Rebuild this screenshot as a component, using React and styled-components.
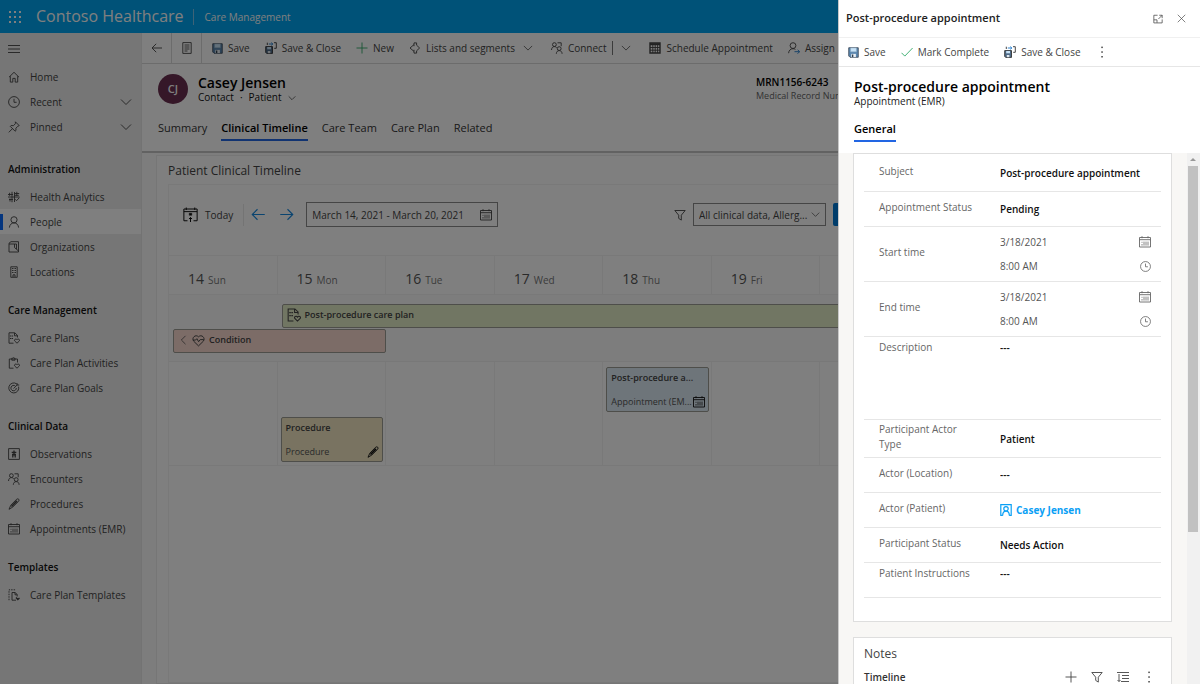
import React from "react";
import styled, { createGlobalStyle, css } from "styled-components";

const GlobalStyle = createGlobalStyle`
  *, *::before, *::after { box-sizing: border-box; }
  html, body { margin: 0; background: #fff; }
  body, button, input, select, textarea {
    font-family: "Open Sans", "Noto Sans", sans-serif;
    font-size: 10px;
    line-height: 16px;
    color: #444;
  }
  button, input, select, textarea {
    margin: 0; padding: 0; border: 0; background: none; appearance: none; outline: none; border-radius: 0;
  }
  h1, h2, h3, p { margin: 0; font-weight: 400; }
  a { color: inherit; text-decoration: none; }
  ul { margin: 0; padding: 0; list-style: none; }
`;

/* ---------- icons, drawn on a 12 unit grid ---------- */

const Svg = styled.svg`
  display: block;
  flex: none;
  width: ${(p) => p.$size || 12}px;
  height: ${(p) => p.$size || 12}px;
  fill: none;
  stroke: currentColor;
  stroke-width: ${(p) => p.$weight || 0.9};
  color: ${(p) => p.$color || "inherit"};
`;

const shapes = {
  waffle: (
    <g fill="currentColor" stroke="none">
      {[0, 5, 10].map((y) =>
        [0, 5, 10].map((x) => <rect key={`${x}-${y}`} x={x} y={y} width="2" height="2" />)
      )}
    </g>
  ),
  menu: <path d="M0 2.5h12M0 6h12M0 9.5h12" />,
  home: <path d="M1 6.2 6 1.3l5 4.9M2.3 5.2v5.9h2.5V7.4h2.4v3.7h2.5V5.2" />,
  clock: (
    <>
      <circle cx="6" cy="6" r="5.4" />
      <path d="M6 2.8v3.5h2.6" />
    </>
  ),
  pin: <path d="m7.4.8 3.8 3.8-1.3.6-2 2 .1 2.2-.9.8-4.8-4.8.8-.9 2.3.2 2-2zM4.6 7.5.8 11.3" />,
  chevronDown: <path d="m1 3.5 5 5 5-5" />,
  chevronLeft: <path d="m9 1-5 5 5 5" />,
  analytics: (
    <path d="M0 3.500h5M0 6h11.500M1 8.500h4M4 .8v10.400M6.500 1v10M8.800.8v4M6.800 2.500h4.400M6.800 4.300h4M7 8.200l1.500 1.500 2.800-3M1.600 1.800v3M2 7.500v3" />
  ),
  person: (
    <>
      <circle cx="6" cy="3.800" r="3.100" />
      <path d="M1.400 11.600c.2-2.800 2-4.700 4.600-4.700s4.400 1.900 4.600 4.700" />
    </>
  ),
  organization: <path d="M1 11V2.200L3 .7h7.500V11zM1 3h5.500v3.500L10.500 10M6.500 3h2v5" />,
  building: (
    <>
      <path d="M2.800.8h6.400v10.500H2.800zM5 11V8.800h2V11" />
      <path d="M4.500 2v5.500M6 2v5.500M7.500 2v5.500" strokeDasharray="1 1" />
    </>
  ),
  carePlan: (
    <>
      <path d="M5.500 11.200H1V.8h5.800L9.500 3.400v2.100M6.500 1v2.800h3" />
      <path d="M2.600 3.500v1M4.400 3.500v1M2.600 6v1M4.400 6v1" strokeWidth="1.300" />
      <path d="M9 11.200 6.700 9c-1-1.400 1.200-2.800 2.300-1.200C10.100 6.200 12.300 7.600 11.300 9z" />
    </>
  ),
  clipboard: (
    <>
      <path d="M5.500 11.200H1.300V2H9.500v3.500M3.800 3.200V1.200h.8Q5.400.1 6.200 1.200H7v2z" />
      <path d="M9 11.200 6.700 9c-1-1.400 1.200-2.800 2.300-1.200C10.100 6.200 12.300 7.600 11.300 9z" />
    </>
  ),
  goal: (
    <>
      <path d="M8.600 1.800A5 5 0 1 0 10.600 4.600" />
      <path d="M7.300 4A2.700 2.700 0 1 0 8.300 6" />
      <path d="M5.600 6.500 9.500 2.600M9 1v2h2.200" />
    </>
  ),
  observation: (
    <>
      <path d="M.6.6h10.800v10.800H.6z" />
      <path d="M6 2.500v4.500M3.700 4.400h4.600M4 6.500h4M4.800 9.500V6.800h2.400v2.700" strokeWidth="1.300" />
    </>
  ),
  people: (
    <>
      <circle cx="3.400" cy="2.600" r="1.900" />
      <path d="M.5 8c.1-2 1.100-3.400 2.900-3.400 1 0 1.800.4 2.300 1.100M6.500.8h3.700v3.400" />
      <circle cx="8.200" cy="6.600" r="1.900" />
      <path d="M5.300 11.800c.1-2 1.200-3.200 2.900-3.200s2.800 1.200 2.900 3.200" />
    </>
  ),
  scalpel: (
    <>
      <path d="M1 11.300 2.800 7.200l5.900-6q1.200-.8 2 0t0 2l-6 5.900z" />
      <path d="m3.500 8.500 5.500-5.700" strokeWidth="1.800" />
    </>
  ),
  calendar: (
    <>
      <path d="M.5 1.500h11v9.500H.5zM.5 3.700h11M3 .2v2M9 .2v2" />
      <path d="M3 9.600V8M5 9.600v-4M7 9.600v-4M9 9.600v-4M3 6.800v-1" strokeWidth=".8" />
    </>
  ),
  template: (
    <>
      <path d="M1 11.200V.8h7" strokeDasharray="1.500 1" />
      <path d="M8 11.200H4V3.500h3.200l2 2v2M7 3.500v2.300h2" />
      <path d="m8 8.500 1.800 2L11.500 9" strokeWidth="1.300" />
    </>
  ),
  back: <path d="M11 6H1.200M5.200 1.800 1 6l4.200 4.200" />,
  forward: <path d="M1 6h9.800M6.800 1.800 11 6l-4.200 4.200" />,
  form: <path d="M1.800.6h8.400v10.800H1.800zM3.500 3h5M3.500 5h5M3.500 7h5M3.500 9h3" />,
  save: (
    <>
      <path d="M.8.8h10.400v10.400H2.200L.8 9.800z" fill="#5a87b0" stroke="#3c4856" />
      <path d="M2.800 1h6.400v4.200H2.800z" fill="#c7e2f7" stroke="#8fa9bf" strokeWidth=".5" />
      <path d="M3.600 7.500h5V11h-5z" fill="#e8eef4" stroke="none" />
      <path d="M4.400 8.300h1.400V11H4.400z" fill="#2b3a49" stroke="none" />
    </>
  ),
  saveClose: (
    <>
      <path d="M.7 4.600h6.800v6.800H1.700l-1-1z" fill="#4f6b88" stroke="#333" />
      <path d="M2.200 5h3.800v2.300H2.200z" fill="#c7e2f7" stroke="none" />
      <path d="M2.800 9h2.600v2.200H2.800z" fill="#dfe7ee" stroke="none" />
      <path d="M2.300 3V.7M9 .7h2.300v5.600H9.200" stroke="#333" />
      <path d="M3.800 2h4M6.300.6 7.800 2 6.300 3.400" stroke="#1976c9" />
    </>
  ),
  plus: <path d="M6 .5v11M.5 6h11" />,
  segments: (
    <path d="M5 .9h2.600v2.300M5 .9v1.700L1 6l4 3.400v1.700h2.600V8.800M5 2.600v1.600M5 9.400V7.800M7.600 3.200 10.600 6l-3 2.800" />
  ),
  grid: (
    <>
      <path d="M1 1h10v10H1z" strokeWidth="1.400" />
      <path d="M1 2.200h10" strokeWidth="2" />
      <path d="M1 5.500h10M1 8.200h10M3.800 3v8M6.200 3v8M8.600 3v8" />
    </>
  ),
  assign: (
    <>
      <circle cx="5" cy="3.600" r="2.900" />
      <path d="M.6 11.200C.8 8.500 2.500 6.700 5 6.700c.9 0 1.700.2 2.400.7" />
      <path d="M6.500 9.700h5M9.600 7.700l2 2-2 2" stroke="#1976c9" />
    </>
  ),
  today: (
    <>
      <path d="M3.600 11H.7V1.600h10.600V11H8.400M.7 3.700h10.600M2.600.4v2M9.400.4v2" strokeWidth=".8" />
      <path d="M5 5h2v1.600H5z" fill="currentColor" strokeWidth=".4" />
      <path d="M6 12V8.400M4.800 9.600 6 8.400l1.200 1.200" strokeWidth=".8" />
    </>
  ),
  filter: <path d="M.8 1.500h10.400L7.300 6.200v4.900l-2.600-1.700V6.200z" />,
  heart: (
    <>
      <path d="M6 11 1.500 6.600C-.7 3.700 3.200-.2 6 2.600c2.800-2.800 6.700 1.100 4.500 4z" />
      <path d="M1 5.600h2.300l1.200-1.300 1.600 2.800 1.500-1.900h3.200" />
    </>
  ),
  popout: <path d="M5.500 1.500H1v9.200h10V6.500M1 7h3.800v3.500M7.500 1.500H11V5M11 1.500 6.500 6" />,
  close: <path d="m1 1 10 10M11 1 1 11" />,
  check: <path d="m.5 6.800 3.300 3.300L11.600 2" />,
  more: (
    <g fill="currentColor" stroke="none">
      <rect x="5.300" y=".6" width="1.500" height="1.500" />
      <rect x="5.300" y="5.300" width="1.500" height="1.500" />
      <rect x="5.300" y="10" width="1.500" height="1.500" />
    </g>
  ),
  contact: (
    <>
      <path d="M2.800 11.300H.8V.7h10.400v10.600h-2" />
      <circle cx="6" cy="4.800" r="2.200" />
      <path d="M2.700 11.500c0-2.700 1.300-4.300 3.300-4.300s3.300 1.600 3.300 4.300" />
    </>
  ),
  sort: <path d="M0 1.500h12M5 4.500h7M5 7.500h7M4 10.500h8M2 3v7.500M.5 9 2 10.500 3.500 9" />,
};

const Icon = ({ name, size, color, weight }) => (
  <Svg viewBox="0 0 12 12" $size={size} $color={color} $weight={weight} aria-hidden="true">
    {shapes[name]}
  </Svg>
);

/* ---------- application shell ---------- */

const Page = styled.div`
  display: flex;
  flex-direction: column;
  height: 100vh;
  overflow: hidden;
`;

const TopBar = styled.header`
  display: flex;
  align-items: center;
  flex: none;
  height: 33px;
  padding-left: 9px;
  background: #00a4f0;
  color: #fff;
`;

const Brand = styled.div`
  padding: 0 9px 2px 15px;
  font-size: 16px;
  line-height: 22px;
`;

const AppName = styled.div`
  padding-left: 11px;
  border-left: 1px solid #7cc6ee;
`;

const Shell = styled.div`
  display: flex;
  flex: 1;
  min-height: 0;
`;

const Sidebar = styled.nav`
  flex: none;
  width: 142px;
  background: #ececec;
  border-right: 1px solid #e6e6e6;
`;

const MenuButton = styled.button`
  display: flex;
  align-items: center;
  height: 31px;
  padding-left: 8px;
`;

const NavHeading = styled.h2`
  padding: 16px 0 4px 8px;
  font-size: 10px;
  font-weight: 600;
  line-height: 21px;
  color: #111;
`;

const NavLink = styled.a`
  display: flex;
  align-items: center;
  gap: 10px;
  height: 25px;
  padding: 0 9px 0 8px;
  ${(p) =>
    p.$active &&
    css`
      background: linear-gradient(#0a6cff, #0a6cff) 0 50% / 3px 16px no-repeat, #fff;
    `}
  span { flex: 1; white-space: nowrap; }
`;

const QuickLinks = styled.ul`
  margin-bottom: 4px;
`;

const Main = styled.main`
  display: flex;
  flex-direction: column;
  flex: 1;
  min-width: 0;
  background: #fff;
`;

const CommandBar = styled.div`
  display: flex;
  align-items: center;
  flex: none;
  height: 31px;
  border-bottom: 1px solid #d8d8d8;
`;

const SquareButton = styled.button`
  display: flex;
  align-items: center;
  justify-content: center;
  width: 30px;
  height: 30px;
  border-right: 1px solid #d8d8d8;
`;

const Commands = styled.div`
  display: flex;
  align-items: center;
  gap: 15px;
  padding-left: ${(p) => p.$inset}px;
`;

const Command = styled.button`
  display: flex;
  align-items: center;
  gap: 5px;
  white-space: nowrap;
`;

const SplitChevron = styled.button`
  padding: 2px 3px 2px 8px;
  margin-left: ${(p) => (p.$divided ? -9 : -16)}px;
  border-left: 1px solid ${(p) => (p.$divided ? "#777" : "transparent")};
`;

const RecordHeader = styled.section`
  flex: none;
  padding: 10px 16px 0;
  border-bottom: 2px solid #c4c4c4;
  height: 89px;
`;

const Identity = styled.div`
  display: flex;
  align-items: center;
  gap: 10px;
`;

const Avatar = styled.div`
  display: grid;
  place-items: center;
  width: 30px;
  height: 30px;
  border-radius: 50%;
  background: #6b2f50;
  color: #fff;
  font-size: 11px;
  font-weight: 600;
`;

const RecordName = styled.h1`
  font-size: 14px;
  font-weight: 600;
  line-height: 17px;
  color: #000;
`;

const RecordKind = styled.div`
  display: flex;
  align-items: center;
  gap: 6px;
  line-height: 13px;
  color: #111;
`;

const RecordFact = styled.div`
  margin-left: auto;
  width: 428px;
  line-height: 13px;
  font-size: 9px;
  color: #666;
  strong { display: block; font-size: 10px; font-weight: 600; color: #000; }
`;

const TabList = styled.div`
  display: flex;
  gap: 14px;
  padding-top: ${(p) => p.$gap}px;
`;

const Tab = styled.button`
  padding-bottom: 3px;
  font-size: 11px;
  line-height: 17px;
  color: ${(p) => (p.$active ? "#000" : "#333")};
  font-weight: ${(p) => (p.$active ? 600 : 400)};
  border-bottom: 2px solid ${(p) => (p.$active ? "#2266e3" : "transparent")};
`;

const Workspace = styled.div`
  display: flex;
  flex: 1;
  min-height: 0;
  padding: 2px 258px 0 14px;
  background: #fafafa;
`;

const TimelineCard = styled.section`
  display: flex;
  flex-direction: column;
  flex: 1;
  min-width: 0;
  padding: 6px 11px 0;
  border: 1px solid #ededed;
  background: #fff;
`;

const CardTitle = styled.h2`
  padding-bottom: ${(p) => p.$gap}px;
  font-size: 12px;
  line-height: 17px;
  color: #444;
`;

const Calendar = styled.div`
  flex: 1;
  border: 1px solid #f2f2f2;
`;

const CalendarTools = styled.div`
  display: flex;
  align-items: center;
  padding: 17px 12px 28px 14px;
`;

const TodayButton = styled.button`
  display: flex;
  align-items: center;
  gap: 7px;
  height: 22px;
  padding-right: 10px;
  border-right: 1px solid #e8e8e8;
`;

const Arrows = styled.div`
  display: flex;
  gap: 13px;
  padding: 0 12px 0 7px;
`;

const Field = styled.div`
  display: flex;
  align-items: center;
  width: ${(p) => p.$width}px;
  height: ${(p) => p.$height}px;
  padding: 0 5px;
  border: 1px solid #8a8a8a;
  input, select { flex: 1; min-width: 0; }
`;

const FilterGroup = styled.div`
  display: flex;
  align-items: center;
  gap: 7px;
  margin-left: auto;
`;

const PrimaryButton = styled.button`
  width: 84px;
  height: 23px;
  border-radius: 2px;
  background: #0078d4;
`;

const Week = styled.div`
  display: grid;
  grid-template-columns: repeat(7, minmax(0, 1fr));
`;

const DayHead = styled.div`
  display: flex;
  align-items: baseline;
  gap: 4px;
  height: 40px;
  padding: 13px 0 0 19px;
  border: solid #f2f2f2;
  border-width: 1px 1px 1px 0;
  color: #777;
  b { font-size: 14px; line-height: 20px; font-weight: 400; color: #555; }
`;

const AllDay = styled(Week)`
  grid-auto-rows: 24px;
  row-gap: 1px;
  padding: 9px 0 8px;
  background: #fafafa;
  border-bottom: 1px solid #f0f0f0;
`;

const tones = { green: "#e3ecc6", red: "#f9d9cf", yellow: "#f2e7c2", blue: "#dceaf4" };

const Bar = styled.div`
  grid-column: ${(p) => p.$from} / ${(p) => p.$to};
  display: flex;
  align-items: center;
  gap: 4px;
  margin-left: 4px;
  padding: 0 4px 2px;
  border: 1px solid #9c9c94;
  border-radius: 2px;
  background: ${(p) => tones[p.$tone]};
  font-size: 9px;
  font-weight: 600;
`;

const DayCell = styled.div`
  display: flex;
  flex-direction: column;
  justify-content: ${(p) => (p.$low ? "flex-end" : "flex-start")};
  height: 104px;
  padding: 5px 2px 3px 3px;
  border: solid #f2f2f2;
  border-width: 0 1px 1px 0;
`;

const EventCard = styled.article`
  display: flex;
  flex-direction: column;
  justify-content: space-between;
  height: 45px;
  padding: 2px 3px 1px 4px;
  border: 1px solid #9c9c94;
  border-radius: 2px;
  background: ${(p) => tones[p.$tone]};
  font-size: 9px;
  h3 { font-size: 9px; font-weight: 600; }
  p { display: flex; align-items: center; justify-content: space-between; color: #555; white-space: nowrap; }
  svg { color: #111; }
`;

/* ---------- appointment panel ---------- */

const Backdrop = styled.div`
  position: fixed;
  inset: 0;
  background: rgba(0, 0, 0, 0.5);
`;

const Panel = styled.aside`
  position: fixed;
  top: 0;
  right: 0;
  bottom: 0;
  display: flex;
  flex-direction: column;
  width: 362px;
  background: #fff;
  border-left: 1px solid #c8c8c8;
`;

const PanelTitleBar = styled.header`
  display: flex;
  align-items: center;
  gap: 14px;
  flex: none;
  height: 38px;
  padding: 0 14px 0 7px;
  border-bottom: 1px solid #f0f0f0;
  color: #666;
  h2 { flex: 1; padding-bottom: 1px; font-size: 11px; font-weight: 600; color: #222; }
`;

const PanelCommands = styled(CommandBar)`
  height: 29px;
  border-bottom-color: #e6e6e6;
`;

const PanelHeader = styled.div`
  flex: none;
  height: 86px;
  padding: 11px 15px 0 15px;
  h1 { font-size: 14px; font-weight: 600; line-height: 17px; color: #000; }
  p { line-height: 13px; color: #222; }
`;

const PanelBody = styled.div`
  display: flex;
  flex: 1;
  min-height: 0;
  background: #f8f7f5;
`;

const PanelScroll = styled.div`
  flex: 1;
  min-width: 0;
  overflow: hidden;
  padding: 0 15px 0 14px;
`;

const ScrollTrack = styled.div`
  flex: none;
  width: 13px;
  padding: 0 2px 0 1px;
  background: #f1f1f1;
`;

const ScrollUp = styled.div`
  height: 13px;
  padding: 5px 2px 0 2px;
  &::before {
    content: "";
    display: block;
    width: 0;
    border: solid transparent;
    border-width: 0 3px 3px;
    border-bottom-color: #999;
  }
`;

const ScrollThumb = styled.div`
  height: 69%;
  background: #c1c1c1;
`;

const Card = styled.section`
  margin-bottom: 15px;
  padding: ${(p) => p.$top || 0}px 10px ${(p) => p.$bottom}px;
  border: 1px solid #dedede;
  background: #fff;
`;

const FormRow = styled.div`
  display: grid;
  grid-template-columns: 121px minmax(0, 1fr);
  align-items: ${(p) => (p.$top ? "start" : "center")};
  min-height: ${(p) => p.$height || 35}px;
  padding: ${(p) => (p.$top ? 3 : 0)}px 10px 0 15px;
  border-bottom: 1px solid #e6e6e6;
`;

const Label = styled.label`
  width: 90px;
  padding-bottom: 3px;
  line-height: 15px;
  color: #666;
  white-space: ${(p) => (p.$wrap ? "normal" : "nowrap")};
`;

const valueText = css`
  width: 100%;
  font-weight: 600;
  color: #111;
`;

const TextInput = styled.input`
  ${valueText}
`;

const Choice = styled.select`
  ${valueText}
`;

const TextArea = styled.textarea`
  ${valueText}
  display: block;
  height: ${(p) => p.$height}px;
  resize: none;
  overflow: hidden;
`;

const DateTime = styled.div`
  display: grid;
  gap: 8px;
  div { display: flex; align-items: center; justify-content: space-between; color: #666; }
  input { width: 100px; color: #555; }
`;

const PersonLink = styled.a`
  display: flex;
  align-items: center;
  gap: 4px;
  font-weight: 700;
  color: #0aa0f5;
`;

const NotesTools = styled.div`
  display: flex;
  align-items: center;
  gap: 14px;
  padding-right: 6px;
  h3 { flex: 1; font-size: 10px; font-weight: 600; line-height: 12px; color: #333; }
`;

/* ---------- data ---------- */

const quickLinks = [
  ["home", "Home", false],
  ["clock", "Recent", true],
  ["pin", "Pinned", true],
];

const navGroups = [
  ["Administration", [["analytics", "Health Analytics"], ["person", "People"], ["organization", "Organizations"], ["building", "Locations"]]],
  ["Care Management", [["carePlan", "Care Plans"], ["clipboard", "Care Plan Activities"], ["goal", "Care Plan Goals"]]],
  ["Clinical Data", [["observation", "Observations"], ["people", "Encounters"], ["scalpel", "Procedures"], ["calendar", "Appointments (EMR)"]]],
  ["Templates", [["template", "Care Plan Templates"]]],
];

const tabs = ["Summary", "Clinical Timeline", "Care Team", "Care Plan", "Related"];

const days = [[14, "Sun"], [15, "Mon"], [16, "Tue"], [17, "Wed"], [18, "Thu"], [19, "Fri"], [20, "Sat"]];

const events = {
  15: { tone: "yellow", title: "Procedure", kind: "Procedure", icon: "scalpel", low: true },
  18: { tone: "blue", title: "Post-procedure a...", kind: "Appointment (EM...", icon: "calendar" },
};

const DateTimeRow = ({ id, label, date, time }) => (
  <FormRow $height={55}>
    <Label htmlFor={id}>{label}</Label>
    <DateTime>
      <div>
        <input id={id} defaultValue={date} />
        <Icon name="calendar" />
      </div>
      <div>
        <input aria-label={`${label}, hour`} defaultValue={time} />
        <Icon name="clock" size={11} />
      </div>
    </DateTime>
  </FormRow>
);

const SideNavigation = () => (
  <Sidebar>
    <MenuButton aria-label="Menu"><Icon name="menu" /></MenuButton>
    <QuickLinks>
      {quickLinks.map(([icon, label, opens]) => (
        <li key={label}>
          <NavLink href="#">
            <Icon name={icon} />
            <span>{label}</span>
            {opens && <Icon name="chevronDown" />}
          </NavLink>
        </li>
      ))}
    </QuickLinks>
    {navGroups.map(([heading, items]) => (
      <section key={heading}>
        <NavHeading>{heading}</NavHeading>
        <ul>
          {items.map(([icon, label]) => (
            <li key={label}>
              <NavLink href="#" $active={label === "People"}>
                <Icon name={icon} />
                <span>{label}</span>
              </NavLink>
            </li>
          ))}
        </ul>
      </section>
    ))}
  </Sidebar>
);

const ClinicalTimeline = () => (
  <TimelineCard>
    <CardTitle $gap={5}>Patient Clinical Timeline</CardTitle>
    <Calendar>
      <CalendarTools>
        <TodayButton><Icon name="today" size={15} color="#111" />Today</TodayButton>
        <Arrows>
          <button aria-label="Previous week"><Icon name="back" size={15} color="#1588e0" /></button>
          <button aria-label="Next week"><Icon name="forward" size={15} color="#1588e0" /></button>
        </Arrows>
        <Field $width={192} $height={25}>
          <input aria-label="Date range" defaultValue="March 14, 2021 - March 20, 2021" />
          <Icon name="calendar" />
        </Field>
        <FilterGroup>
          <Icon name="filter" />
          <Field $width={133} $height={23}>
            <select aria-label="Clinical data filter"><option>All clinical data, Allerg...</option></select>
            <Icon name="chevronDown" size={9} />
          </Field>
          <PrimaryButton aria-label="Apply filter" />
        </FilterGroup>
      </CalendarTools>
      <Week>
        {days.map(([n, name]) => (
          <DayHead key={n}><b>{n}</b>{name}</DayHead>
        ))}
      </Week>
      <AllDay>
        <Bar $tone="green" $from={2} $to={8}><Icon name="carePlan" size={14} />Post-procedure care plan</Bar>
        <Bar $tone="red" $from={1} $to={3}>
          <Icon name="chevronLeft" size={10} /><Icon name="heart" size={13} />Condition
        </Bar>
      </AllDay>
      <Week>
        {days.map(([n]) => {
          const event = events[n];
          return (
            <DayCell key={n} $low={event?.low}>
              {event && (
                <EventCard $tone={event.tone}>
                  <h3>{event.title}</h3>
                  <p>{event.kind}<Icon name={event.icon} /></p>
                </EventCard>
              )}
            </DayCell>
          );
        })}
      </Week>
    </Calendar>
  </TimelineCard>
);

const AppointmentPanel = () => (
  <Panel role="dialog" aria-label="Post-procedure appointment">
    <PanelTitleBar>
      <h2>Post-procedure appointment</h2>
      <button aria-label="Open in full page"><Icon name="popout" size={10} /></button>
      <button aria-label="Close"><Icon name="close" size={9} /></button>
    </PanelTitleBar>
    <PanelCommands>
      <Commands $inset={9}>
        <Command><Icon name="save" size={11} />Save</Command>
        <Command><Icon name="check" color="#2fa866" />Mark Complete</Command>
        <Command><Icon name="saveClose" />Save &amp; Close</Command>
        <Command aria-label="More commands"><Icon name="more" /></Command>
      </Commands>
    </PanelCommands>
    <PanelHeader>
      <h1>Post-procedure appointment</h1>
      <p>Appointment (EMR)</p>
      <TabList role="tablist" $gap={12}>
        <Tab role="tab" aria-selected="true" $active>General</Tab>
      </TabList>
    </PanelHeader>
    <PanelBody>
      <PanelScroll>
        <Card $bottom={23}>
          <FormRow $height={38}>
            <Label htmlFor="subject">Subject</Label>
            <TextInput id="subject" defaultValue="Post-procedure appointment" />
          </FormRow>
          <FormRow>
            <Label htmlFor="status">Appointment Status</Label>
            <Choice id="status"><option>Pending</option></Choice>
          </FormRow>
          <DateTimeRow id="start" label="Start time" date="3/18/2021" time="8:00 AM" />
          <DateTimeRow id="end" label="End time" date="3/18/2021" time="8:00 AM" />
          <FormRow $top $height={83}>
            <Label htmlFor="description">Description</Label>
            <TextArea id="description" $height={64} defaultValue="---" />
          </FormRow>
          <FormRow $height={38}>
            <Label $wrap htmlFor="actor-type">Participant Actor Type</Label>
            <Choice id="actor-type"><option>Patient</option></Choice>
          </FormRow>
          <FormRow>
            <Label htmlFor="location">Actor (Location)</Label>
            <TextInput id="location" defaultValue="---" />
          </FormRow>
          <FormRow>
            <Label as="span">Actor (Patient)</Label>
            <PersonLink href="#"><Icon name="contact" weight={1.2} />Casey Jensen</PersonLink>
          </FormRow>
          <FormRow>
            <Label htmlFor="participant-status">Participant Status</Label>
            <Choice id="participant-status"><option>Needs Action</option></Choice>
          </FormRow>
          <FormRow $top>
            <Label htmlFor="instructions">Patient Instructions</Label>
            <TextArea id="instructions" $height={20} defaultValue="---" />
          </FormRow>
        </Card>
        <Card $top={7} $bottom={20}>
          <CardTitle as="h2" $gap={9}>Notes</CardTitle>
          <NotesTools>
            <h3>Timeline</h3>
            <button aria-label="Add note"><Icon name="plus" /></button>
            <button aria-label="Filter notes"><Icon name="filter" /></button>
            <button aria-label="Sort notes"><Icon name="sort" /></button>
            <button aria-label="More options"><Icon name="more" /></button>
          </NotesTools>
        </Card>
      </PanelScroll>
      <ScrollTrack aria-hidden="true">
        <ScrollUp />
        <ScrollThumb />
      </ScrollTrack>
    </PanelBody>
  </Panel>
);

export default function App() {
  return (
    <>
      <GlobalStyle />
      <Page>
        <TopBar>
          <Icon name="waffle" />
          <Brand>Contoso Healthcare</Brand>
          <AppName>Care Management</AppName>
        </TopBar>
        <Shell>
          <SideNavigation />
          <Main>
            <CommandBar>
              <SquareButton aria-label="Back"><Icon name="back" /></SquareButton>
              <SquareButton aria-label="Form"><Icon name="form" /></SquareButton>
              <Commands $inset={10}>
                <Command><Icon name="save" size={11} />Save</Command>
                <Command><Icon name="saveClose" />Save &amp; Close</Command>
                <Command><Icon name="plus" color="#2fa866" />New</Command>
                <Command><Icon name="segments" />Lists and segments</Command>
                <SplitChevron aria-label="More lists"><Icon name="chevronDown" size={10} /></SplitChevron>
                <Command><Icon name="people" />Connect</Command>
                <SplitChevron $divided aria-label="More connections"><Icon name="chevronDown" size={10} /></SplitChevron>
                <Command><Icon name="grid" />Schedule Appointment</Command>
                <Command><Icon name="assign" />Assign</Command>
              </Commands>
            </CommandBar>
            <RecordHeader>
              <Identity>
                <Avatar>CJ</Avatar>
                <div>
                  <RecordName>Casey Jensen</RecordName>
                  <RecordKind>
                    <span>Contact</span><span>·</span><span>Patient</span>
                    <Icon name="chevronDown" size={8} />
                  </RecordKind>
                </div>
                <RecordFact><strong>MRN1156-6243</strong>Medical Record Number</RecordFact>
              </Identity>
              <TabList role="tablist" $gap={15}>
                {tabs.map((tab) => (
                  <Tab key={tab} role="tab" aria-selected={tab === "Clinical Timeline"} $active={tab === "Clinical Timeline"}>
                    {tab}
                  </Tab>
                ))}
              </TabList>
            </RecordHeader>
            <Workspace>
              <ClinicalTimeline />
            </Workspace>
          </Main>
        </Shell>
      </Page>
      <Backdrop />
      <AppointmentPanel />
    </>
  );
}
